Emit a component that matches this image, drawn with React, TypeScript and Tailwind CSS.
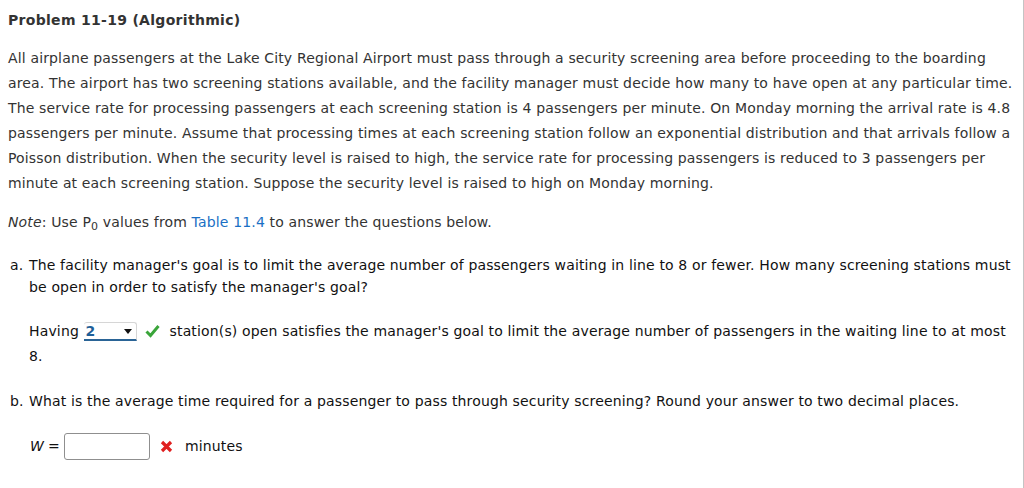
import React from "react";

const App: React.FC = () => {
  return (
    <div
      className="w-[1024px] h-[488px] bg-white border-r border-[#c4c4c4] text-[#333] text-[14px] tracking-[0.15px]"
      style={{ fontFamily: '"DejaVu Sans", Verdana, sans-serif' }}
    >
      <div className="pl-[8px] pr-[2px] pt-[11px]">
        <div className="font-bold text-[14px] tracking-[0.3px] leading-[18px] text-[#333]">
          Problem 11-19 (Algorithmic)
        </div>

        <p className="mt-[17px] leading-[25px]">
          All airplane passengers at the Lake City Regional Airport must pass through a security screening area before proceeding to the boarding area. The airport has two screening stations available, and the facility manager must decide how many to have open at any particular time. The service rate for processing passengers at each screening station is 4 passengers per minute. On Monday morning the arrival rate is 4.8 passengers per minute. Assume that processing times at each screening station follow an exponential distribution and that arrivals follow a Poisson distribution. When the security level is raised to high, the service rate for processing passengers is reduced to 3 passengers per minute at each screening station. Suppose the security level is raised to high on Monday morning.
        </p>

        <p className="mt-[14px] leading-[25px]">
          <i>Note</i>: Use P<sub className="text-[11px]">0</sub> values from{" "}
          <span className="text-[#1a6fc4]">Table 11.4</span> to answer the questions below.
        </p>

        <div className="mt-[19px] flex text-[#111] leading-[22px] pr-[6px]">
          <span className="w-[21px] shrink-0 pl-[2px]">a.</span>
          <span>
            The facility manager's goal is to limit the average number of passengers waiting in line to 8 or fewer. How many screening stations must be open in order to satisfy the manager's goal?
          </span>
        </div>

        <div className="mt-[21px] pl-[21px] pr-[6px] leading-[25px] text-[#111]">
          Having{" "}
          <span className="inline-flex items-start justify-between align-baseline w-[53px] h-[19px] pl-[2px] pr-[4px] border-t border-r border-[#d6d6d6] rounded-t-[3px] border-b-2 border-b-[#2a6496] leading-[17px]">
            <span className="font-bold text-[#1f5f98]">2</span>
            <span className="mt-[6px] w-0 h-0 border-l-[4px] border-r-[4px] border-t-[5px] border-l-transparent border-r-transparent border-t-[#111]" />
          </span>
          <svg
            className="inline-block align-middle ml-[8px] mr-[10px] -mt-[3px]"
            width="15"
            height="14"
            viewBox="0 0 15 14"
          >
            <path d="M1.5 7.5 L5.5 11.5 L13.5 2" stroke="#3aa53a" strokeWidth="3" fill="none" />
          </svg>
          station(s) open satisfies the manager's goal to limit the average number of passengers in the waiting line to at most 8.
        </div>

        <div className="mt-[21px] flex text-[#111] leading-[22px] pr-[6px]">
          <span className="w-[21px] shrink-0 pl-[2px]">b.</span>
          <span>
            What is the average time required for a passenger to pass through security screening? Round your answer to two decimal places.
          </span>
        </div>

        <div className="mt-[21px] pl-[22px] flex items-center text-[#111]">
          <i className="mr-[4px]">W</i>
          <span>=</span>
          <input
            className="ml-[4px] w-[86px] h-[27px] border border-[#8f8f8f] rounded-[3px] outline-none"
            readOnly
          />
          <svg className="ml-[10px]" width="13" height="13" viewBox="0 0 13 13">
            <path d="M2 2 L11 11 M11 2 L2 11" stroke="#e02020" strokeWidth="3.2" />
          </svg>
          <span className="ml-[12px]">minutes</span>
        </div>
      </div>
    </div>
  );
};

export default App;
